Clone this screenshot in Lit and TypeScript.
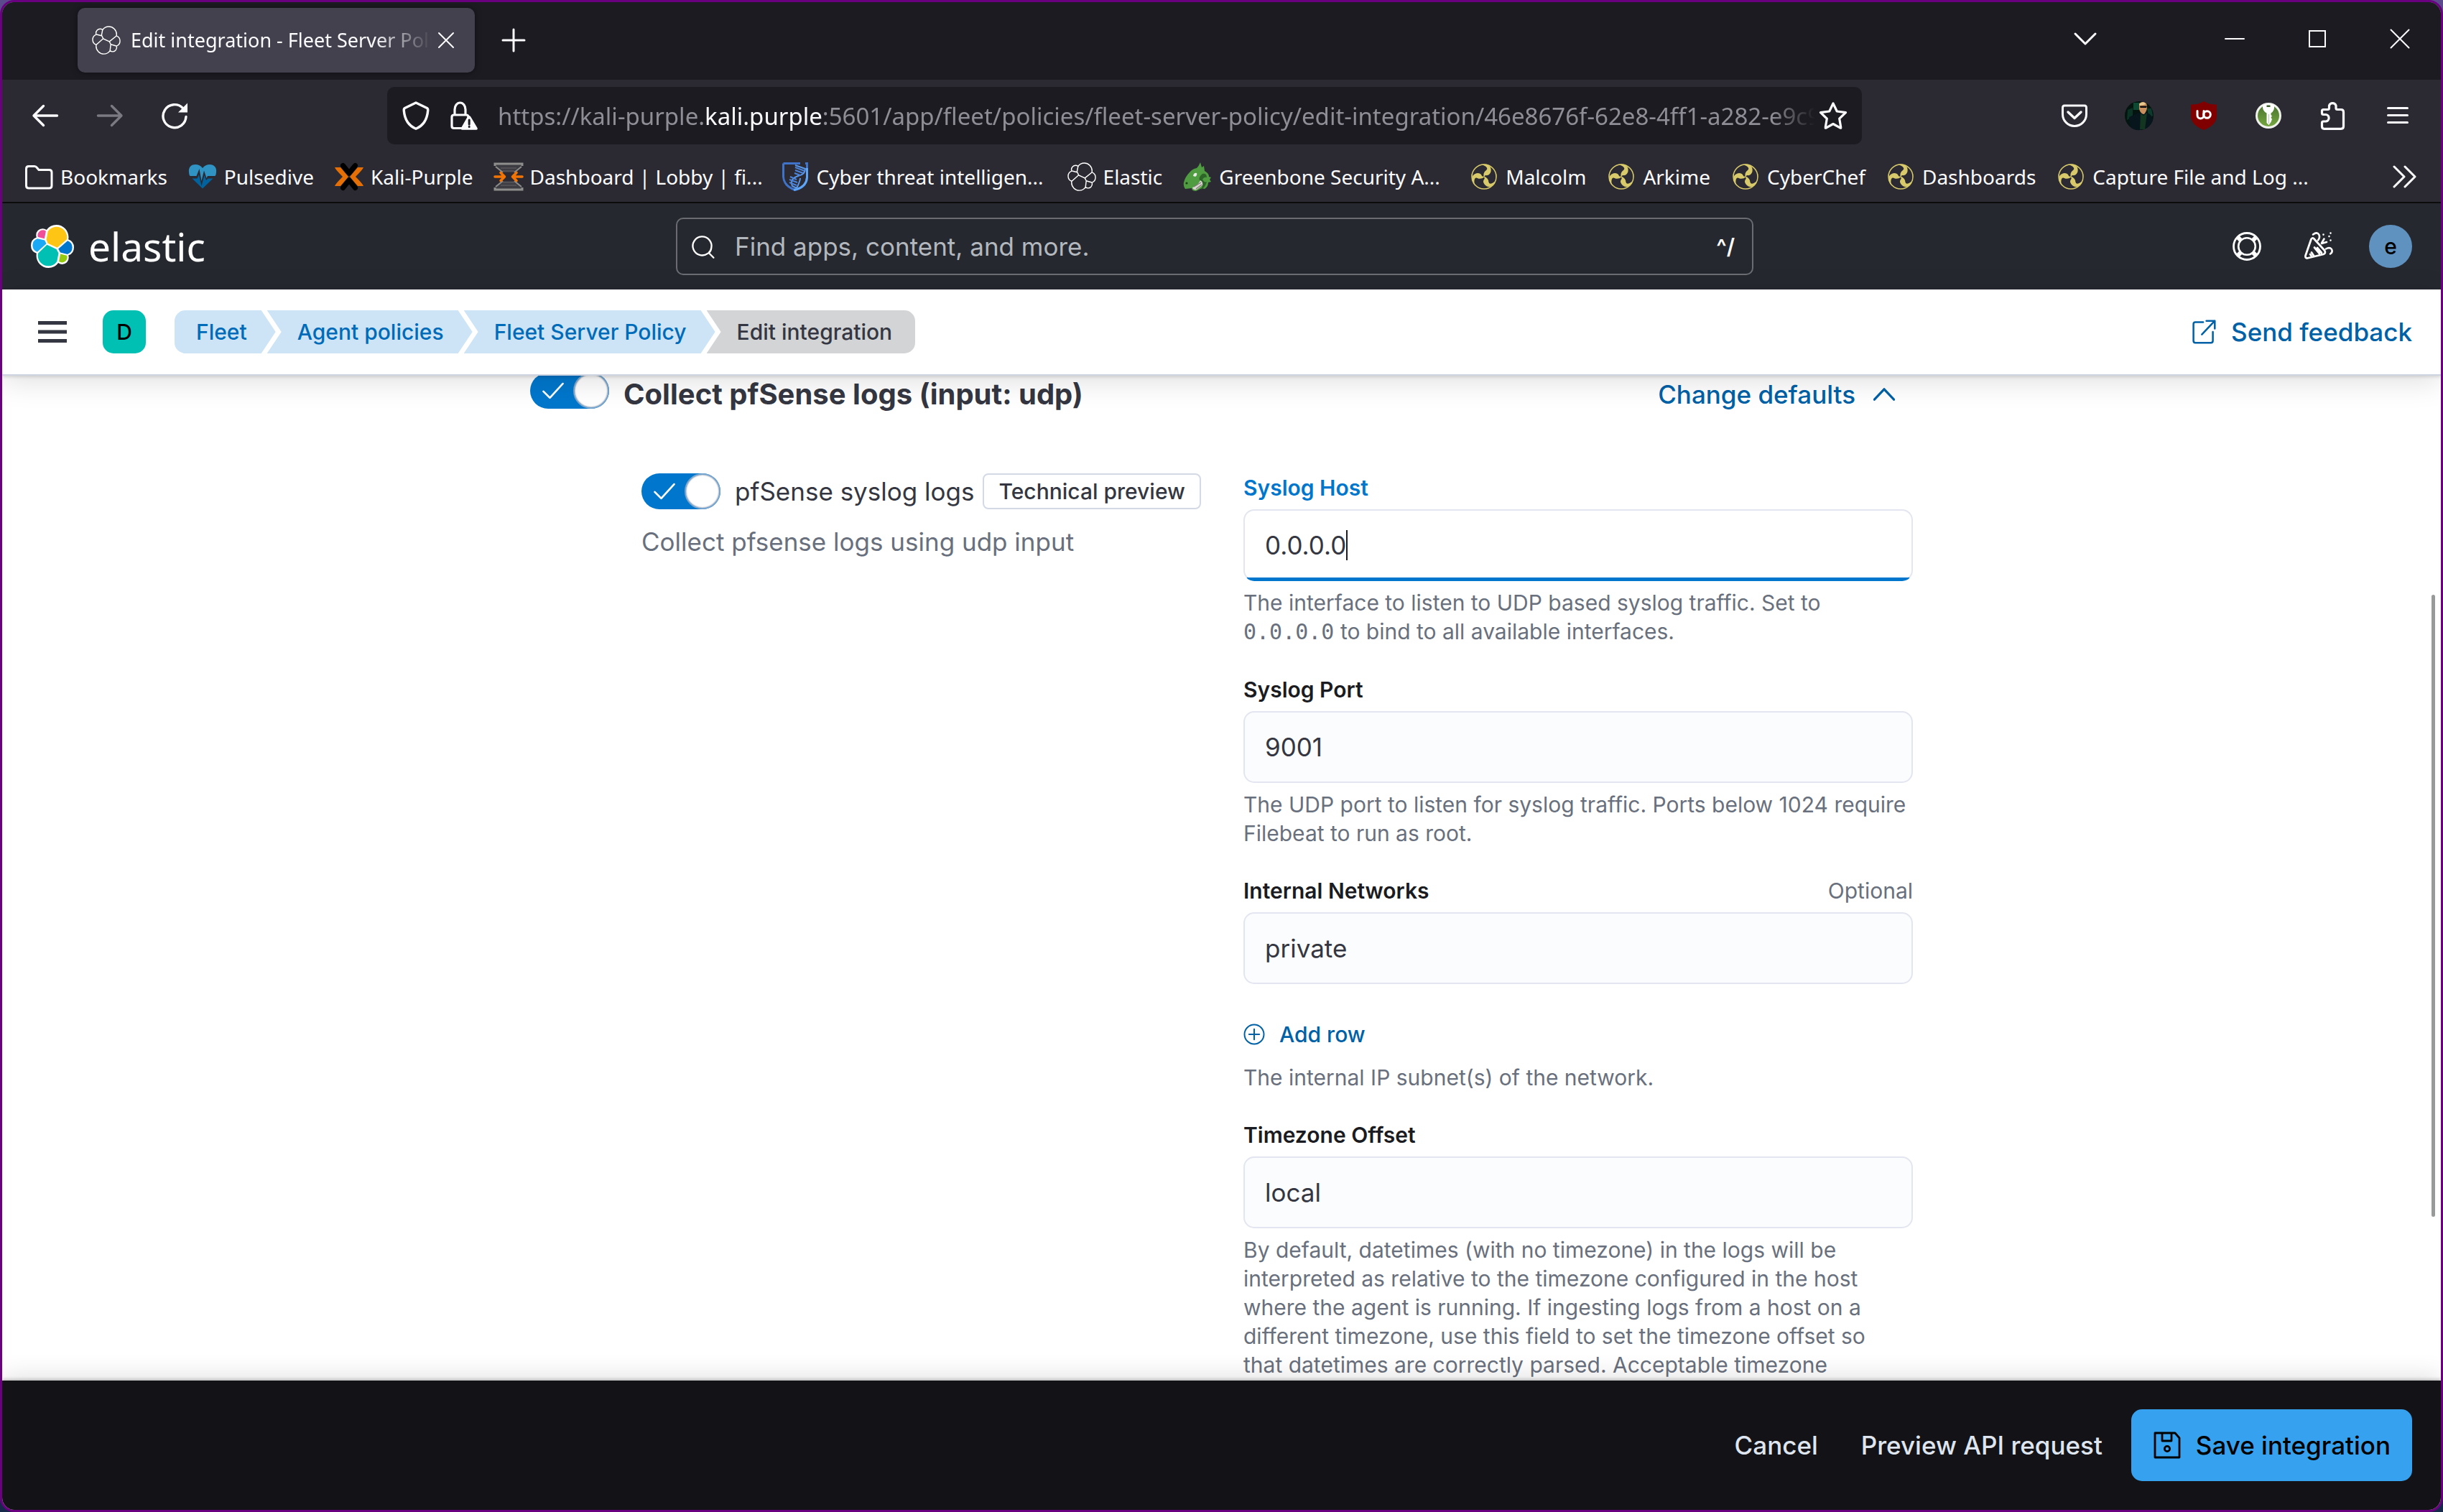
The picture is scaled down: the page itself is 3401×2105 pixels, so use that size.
import { LitElement, html, svg, css, nothing, type TemplateResult } from "lit";
import { customElement, property } from "lit/decorators.js";
import { classMap } from "lit/directives/class-map.js";

/* ---------- Elastic cluster ---------- */

const CLUSTER = {
  outline:
    "M32 16.77a6.334 6.334 0 00-4.172-5.927c.11-.574.165-1.157.165-1.74 0-5.017-4.06-9.1-9.05-9.1a9.02 9.02 0 00-7.317 3.76 4.807 4.807 0 00-2.94-1.01 4.85 4.85 0 00-4.833 4.86 4.9 4.9 0 00.299 1.693A6.372 6.372 0 000 15.273a6.35 6.35 0 004.184 5.949 9.207 9.207 0 00-.162 1.74c0 5.002 4.05 9.07 9.026 9.07a8.99 8.99 0 007.305-3.767 4.8 4.8 0 002.941 1.017 4.85 4.85 0 004.833-4.86 4.9 4.9 0 00-.298-1.693A6.376 6.376 0 0032 16.77z",
  yellow:
    "M12.58 13.787l7.002 3.211 7.066-6.213a7.85 7.85 0 00.152-1.557c0-4.287-3.464-7.763-7.74-7.763-2.56 0-4.942 1.267-6.388 3.39l-1.176 6.119 1.084 2.813z",
  teal:
    "M5.333 21.214a7.976 7.976 0 00-.154 1.576c0 4.3 3.476 7.786 7.765 7.786a7.76 7.76 0 006.41-3.412l1.167-6.1-1.557-2.988-7.03-3.215-6.6 6.353z",
  pink:
    "M5.288 9.067l4.8 1.137L11.138 4.7a3.785 3.785 0 00-2.3-.781 3.816 3.816 0 00-3.808 3.821c0 .456.084.902.257 1.327z",
  sky:
    "M4.872 10.214a5.294 5.294 0 00-3.595 5.004 5.3 5.3 0 003.45 4.95l6.733-6.106-1.236-2.65-5.352-1.198z",
  lime:
    "M20.873 27.164a3.785 3.785 0 002.283.773 3.81 3.81 0 003.8-3.82c0-.457-.084-.9-.256-1.325l-4.794-1.126-1.033 5.498z",
  blue:
    "M21.848 20.563l5.281 1.24a5.32 5.32 0 003.594-5.005 5.296 5.296 0 00-3.437-4.94l-6.907 6.055 1.469 2.65z",
};

/* ---------- icon drawings, on a 40 unit square ---------- */

const line = (d: string, w = 3, color = "currentColor") =>
  svg`<path d=${d} fill="none" stroke=${color} stroke-width=${w} stroke-linecap="round" stroke-linejoin="round"/>`;

const SHAPES: Record<string, TemplateResult<2>> = {
  clusterLine: svg`<g transform="translate(1 1) scale(1.19)" fill="none" stroke="#fff" stroke-width="1.2">
      <path d=${CLUSTER.outline}/>
      <path d="M11.6 3.8l-1.2 6.3 2 4.1 7.2 3.3 8.2-6.6M4.5 9.3l6 1.4M4.3 21.2l8-7.2M19.6 17.5l1.6 3.3-.9 7.4M21.2 20.8l6.4 1.9"/></g>`,
  clusterColor: svg`<g transform="scale(1.25)">
      <path fill="#fff" d=${CLUSTER.outline}/>
      <path fill="#fec514" d=${CLUSTER.yellow}/><path fill="#00bfb3" d=${CLUSTER.teal}/>
      <path fill="#f04e98" d=${CLUSTER.pink}/><path fill="#1ba9f5" d=${CLUSTER.sky}/>
      <path fill="#93c90e" d=${CLUSTER.lime}/><path fill="#07c" d=${CLUSTER.blue}/></g>`,
  close: line("M10 10L30 30M30 10L10 30", 2),
  plus: line("M20 5V35M5 20H35", 3),
  chevronDown: line("M6 13L20 27L34 13", 3),
  minimize: line("M7 20H33", 2),
  maximize: svg`<rect x="9" y="9" width="22" height="22" fill="none" stroke="currentColor" stroke-width="2"/>`,
  windowClose: line("M7.500 7.500L32.500 32.500M32.500 7.500L7.500 32.500", 2),
  back: line("M36.500 20H4M17.500 6.500L4 20L17.500 33.500", 3.4),
  forward: line("M3.500 20H36M22.500 6.500L36 20L22.500 33.500", 3.4),
  reload: svg`${line("M36 21.500A16 16 0 1 1 31.500 9.500", 3.4)}<path d="M38 2.500V15.500H25Z" fill="currentColor"/>`,
  shield: line("M20 2L4.500 9.500Q3 10.500 3.300 13C4.500 27 11 34.500 20 38.200C29 34.500 35.500 27 36.700 13Q37 10.500 35.500 9.500Z", 3.4),
  lock: svg`${line("M17 37.500H6Q3 37.500 3 34.500V22Q3 19 6 19H23Q26 19 26 22V23M7 19V11.500A7.500 9.500 0 0 1 22 11.500V19", 3.2)}
      <path d="M27 20Q28.500 20 29.300 21.500L38.500 37Q39.500 39.500 37 39.800H17.500Q15 39.500 16 37L24.800 21.500Q25.600 20 27 20Z" fill="currentColor"/>
      <path d="M27.200 26V32M27.200 35.300V35.600" stroke="#1c1b22" stroke-width="3" stroke-linecap="round"/>`,
  star: line("M20 3L25.300 14L37.500 15.700L28.700 24.200L30.800 36.500Q31 37.500 30 37.200L20 31.500L10 37.200Q9 37.500 9.200 36.500L11.300 24.200L2.500 15.700L14.700 14Z", 3.2),
  pocket: svg`${line("M6 6H34Q36.500 6 36.500 9V18A16.500 16.500 0 0 1 3.500 18V9Q3.500 6 6 6Z", 3)}${line("M11 15L20 23.500L29 15", 3.4)}`,
  agent: svg`<circle cx="20" cy="20" r="20" fill="#04150f"/>
      <path d="M12 2H20V12H12Z" fill="#0e4a33"/><path d="M4 12L11 9V22L3 26Z" fill="#0a3325"/><path d="M31 10H37L39 20L34 24Z" fill="#0d3b2b"/>
      <path d="M9 37Q5 28 6 22L19 16L31 16Q38 18 39 27Q35 36 27 39Q15 42 9 37Z" fill="#07161c"/>
      <path d="M22 17L26 20L31 16L28 39H21Z" fill="#12361f"/>
      <path d="M20 3Q25-1 30 3Q32 8 30 13Q28 18 26 18Q22 17 20 11Z" fill="#c98f5d"/>
      <path d="M20 4Q25-1 29 3L27 5L21 6Z" fill="#e8c98f"/><path d="M21 6.500H31L30 9H26.500L21.500 9Z" fill="#0c0c0c"/>`,
  ublock: svg`<path d="M20 0Q28 5 38 4.500V20Q38 33 20 40Q2 33 2 20V4.500Q12 5 20 0Z" fill="#800000"/>
      ${line("M11 13.500V19.500A4.500 4.500 0 0 0 20 19.500V13.500", 3, "#fff")}<circle cx="24.500" cy="18.500" r="4.800" fill="none" stroke="#fff" stroke-width="3"/>`,
  keepass: svg`<defs><linearGradient id="kp" x1="0" y1="0" x2="0" y2="1"><stop offset="0" stop-color="#4b7430"/><stop offset="1" stop-color="#75a63f"/></linearGradient></defs>
      <circle cx="20" cy="20" r="18" fill="#f1f1ee"/><circle cx="20" cy="20" r="15" fill="url(#kp)"/>
      <path d="M12 6Q20 1 28 6Q29 13 23.500 16.500L23.500 19L25 20.500L23.500 22.500L25 25L23.500 29L20.500 33L17.500 30V16.500Q11 13 12 6Z" fill="#fff"/>
      <path d="M17.500 5.500H22.500V8H17.500Z" fill="#3d6029"/><path d="M20.500 18V31" stroke="#b9c6ab" stroke-width="1"/>`,
  puzzle: line("M6.500 11.500H12.500Q14.500 11.500 14.500 9.500V6A5 5 0 0 1 24 6V9.500Q24 11.500 26 11.500H31Q34.500 11.500 34.500 15V35Q34.500 38.300 31 38.300H7.500Q4.500 38.300 4.500 35V30Q4.500 28 6.500 28H10A4.800 4.800 0 0 0 10 18.500H6.500Q4.500 18.500 4.500 16.500V13.500Q4.500 11.500 6.500 11.500Z", 3.2),
  menu: line("M6.500 9.500H33.500M6.500 19.500H33.500M6.500 29.500H33.500", 3),
  folder: line("M6 5.500H14Q16 5.500 17.500 7.500L20 10.500H34.500Q38 10.500 38 14V32.500Q38 36 34.500 36H6Q2.500 36 2.500 32.500V9Q2.500 5.500 6 5.500Z", 3),
  pulse: svg`<path d="M1 14C0 6 5 3 10 3Q16 3 20 8Q24 3 30 3C36 3 40 7 39 14Q39 17 37.500 19H27L25.500 22L22 11.500L18.500 26L15.500 9L11.500 19H2.500Q1 17 1 14Z" fill="#2f93c3"/>
      <path d="M5.500 22.500H12.500L15 17L18.500 33L22.500 18L25 25L27.500 22.500H34.500L20 36.500Z" fill="#00639d"/>`,
  kali: svg`${line("M11.500 4.500L20 15L28.500 4.500M11.500 35.500L20 25L28.500 35.500", 7, "#000")}
      <path d="M0 7H8L19 20L8 33H0Q1 30 11 20Q1 10 0 7ZM40 7H32L21 20L32 33H40Q39 30 29 20Q39 10 40 7Z" fill="#e66f05"/>`,
  lobby: svg`<path d="M2 2H38V5L28 14H12L2 5ZM2 38H38V35L28 26H12L2 35Z" fill="#3c3c42"/>
      <path d="M1 5V2H39V5M1 35V38H39V35" fill="none" stroke="#8e8e8c" stroke-width="3"/>
      <path d="M2 6L12 14M38 6L28 14M2 34L12 26M38 34L28 26" stroke="#8c8c8a" stroke-width="2"/>
      <path d="M9 8H31M9 32H31M12 12H28M12 28H28" stroke="#55565b" stroke-width="1.500"/>
      ${line("M1 20H13M9 14.500L14.500 20L9 25.500M39 20H27M31 14.500L25.500 20L31 25.500", 3.6, "#f27405")}`,
  threat: svg`<path d="M3.500 1.500H27M34 1.500H36.500V21C36 30 30 36 20 38.500C10 35 4 29 3.500 20V1.500" fill="none" stroke="#3f73c9" stroke-width="3"/>
      <path d="M36.500 8V21C36 30 30 36 18 38.500" fill="none" stroke="#5ea5f5" stroke-width="3"/>
      <path d="M20 4L34 9Q34 17 24 19Q12 23 16 33L22 36Q27 26 27 22" fill="none" stroke="#5a97e8" stroke-width="2"/>
      <path d="M20 7L33 12M20 11L31 15M19 15L27 18M13 20L22 24M12 24L23 28M12 28L22 32" stroke="#4b83d8" stroke-width="2"/>`,
  dragon: svg`<path d="M24 0L26 7L29 5L30 12Q36 15 36 20L39 21L37 24L39 27L35 28Q35 34 30 37L26 36L18 40Q12 40 12 36L3 37Q0 33 1 28Q3 20 9 14Q13 9 19 8Q22 5 24 0Z" fill="#509c41"/>
      <path d="M27 16Q33 15 33 21Q29 20 27 24Q30 29 33 27Q31 35 25 38Q29 31 24 26Q20 22 27 16Z" fill="#2d6427"/>
      <path d="M13 35Q20 33 24 25Q28 27 27 32L19 38Q14 39 13 35Z" fill="#d9d6cf"/><path d="M15 34L25 28M18 37L26 31" stroke="#7d7b74" stroke-width="1.200"/>
      <path d="M14 19Q15 14 19 15Q20 18 17 20Z" fill="#e9ebe6"/><circle cx="5" cy="29" r="1.600" fill="#1d3d19"/>`,
  trefoil: svg`<circle cx="20" cy="20" r="17" fill="none" stroke="#d8ca6a" stroke-width="1.600"/>
      <g fill="#d8ca6a">${[0, 120, 240].map(
        (turn) => svg`<path transform=${`rotate(${turn} 20 20)`} d="M19.500 20.500Q18.500 14 23 11Q26 8.500 22 5.500Q19 3.500 16 3Q25 1 29 7Q31 13 27 17Q25.500 18.500 22 18Z"/>`,
      )}</g>`,
  more: line("M6 6L20 20L6 34M21 6L35 20L21 34", 3),
  search: line("M27 31A14.500 14.500 0 1 1 32.500 22.500Q32 27 28.500 30L36 37.500", 2.6),
  lifebuoy: svg`<circle cx="20" cy="20" r="18.500" fill="none" stroke="currentColor" stroke-width="2.800"/>
      <circle cx="20" cy="20" r="11.800" fill="none" stroke="currentColor" stroke-width="2.600"/>
      <path d="M7.500 7.500L12 12M32.500 7.500L28 12M7.500 32.500L12 28M32.500 32.500L28 28" stroke="currentColor" stroke-width="6"/>`,
  party: svg`${line("M13 9L28 25.500Q30.500 29.500 26.500 31L4 36.500Q1 36.500 1.500 33L9.500 10Q11 7.500 13 9ZM10 28.500L13 33M9.500 33L8 31M14 21.500L21 30M18 22L24 29", 2.8)}
      ${line("M12 3.500Q18-1 20.500 4Q22 8 19 11.500M24 15.500L27.500 9.500M24 16L31 14M30 23.500Q35 20.500 38 24Q40 28 36 30.500", 2.6)}
      ${line("M26.500 3.500V3.600M34.500 6V6.100M36.500 1.500V1.600M36.500 11.500V11.600", 2.6)}`,
  external: line("M19 5H7Q4 5 4 8V34Q4 37 7 37H31Q34 37 34 34V20M24 3H37V15M37 3L17 24", 2.8),
  chevronUp: line("M5 28L20 12L35 28", 3.600),
  addCircle: svg`<circle cx="20" cy="20" r="18" fill="none" stroke="currentColor" stroke-width="2.600"/>${line("M20 10.500V29.500M10.500 20H29.500", 2.8)}`,
  save: svg`<path d="M3 3H31L37 10V37H3ZM13 4V14H26V4" fill="none" stroke="currentColor" stroke-width="2.800" stroke-linejoin="round"/><circle cx="20" cy="25" r="3.600" fill="none" stroke="currentColor" stroke-width="2.800"/>`,
  check: line("M5 21L15 31L35 9", 3),
  bars: svg`<path d="M0 5H40V10H0ZM0 17.500H40V22.500H0ZM0 30H40V35H0Z" fill="currentColor"/>`,
};

const icon = (name: string, cls = "i40") =>
  html`<svg class="icon ${cls}" viewBox="0 0 40 40" aria-hidden="true">${SHAPES[name]}</svg>`;

const iconStyles = css`
  *, *::before, *::after { box-sizing: border-box; }
  .icon { display: block; flex: none; overflow: visible; }
  .i30 { width: 30px; height: 30px; }
  .i36 { width: 36px; height: 36px; }
  .i40 { width: 40px; height: 40px; }
  .i60 { width: 60px; height: 60px; }
  button { border: 0; margin: 0; padding: 0; background: none; color: inherit; font: inherit; }
  a { color: inherit; text-decoration: none; }
`;

/* ---------- browser chrome ---------- */

const BOOKMARKS: [string, string][] = [
  ["folder", "Bookmarks"],
  ["pulse", "Pulsedive"],
  ["kali", "Kali-Purple"],
  ["lobby", "Dashboard | Lobby | fi..."],
  ["threat", "Cyber threat intelligen..."],
  ["clusterLine", "Elastic"],
  ["dragon", "Greenbone Security A..."],
  ["trefoil", "Malcolm"],
  ["trefoil", "Arkime"],
  ["trefoil", "CyberChef"],
  ["trefoil", "Dashboards"],
  ["trefoil", "Capture File and Log ..."],
];

@customElement("browser-chrome")
export class BrowserChrome extends LitElement {
  static styles = [
    iconStyles,
    css`
      :host {
        display: block;
        color: #fbfbfe;
        background: #2b2a33;
        border-bottom: 2px solid #0c0c0d;
        font-family: "Noto Sans", "Open Sans", sans-serif;
        font-size: 28px;
      }
      .tabbar { display: flex; height: 108px; padding: 8px 0 0 105px; background: #1c1b22; }
      .tab {
        display: flex; align-items: center; gap: 14px;
        width: 553px; height: 90px; padding: 0 20px;
        border-radius: 10px; background: #42414d;
        box-shadow: 0 0 8px rgba(0, 0, 0, 0.5);
      }
      .tab-title {
        flex: 1; overflow: hidden; white-space: nowrap; font-size: 27px; line-height: 60px;
        mask-image: linear-gradient(to left, transparent, #000 80px);
      }
      .tab-close { margin-left: -14px; }
      .new-tab { display: grid; place-items: center; width: 78px; height: 90px; margin-left: 15px; }
      .grow { flex: 1; }
      .list-tabs { display: grid; place-items: center; width: 80px; height: 86px; margin-right: 110px; }
      .win { display: grid; place-items: center; width: 115px; height: 86px; }
      .toolbar { display: flex; align-items: center; height: 100px; padding: 0 15px; }
      .tool { display: grid; place-items: center; width: 90px; height: 80px; }
      .dim { color: #7b7a82; }
      .side { flex: 251; }
      .urlbar {
        flex: 2013; min-width: 0; height: 80px; padding: 0 20px;
        display: flex; align-items: center; gap: 27px;
        border-radius: 10px; background: #1c1b22;
      }
      .url {
        flex: 1; overflow: hidden; white-space: nowrap; padding-top: 2px; font-size: 33px; line-height: 60px;
        color: #8f8e96; mask-image: linear-gradient(to left, transparent, #000 60px);
      }
      .url b { font-weight: 400; color: #fbfbfe; }
      .star { margin-left: -22px; }
      .bookmarks { display: flex; align-items: center; height: 70px; padding: 0 31px; gap: 29px; }
      .bookmark { display: flex; align-items: center; gap: 10px; white-space: nowrap; }
      .long { width: 320px; }
    `,
  ];

  render() {
    return html`
      <div class="tabbar">
        <div class="tab">
          ${icon("clusterLine")}
          <span class="tab-title">Edit integration - Fleet Server Policy</span>
          <button class="tab-close" aria-label="Close tab">${icon("close")}</button>
        </div>
        <button class="new-tab" aria-label="New tab">${icon("plus")}</button>
        <div class="grow"></div>
        <button class="list-tabs" aria-label="List all tabs">${icon("chevronDown")}</button>
        <button class="win" aria-label="Minimize">${icon("minimize")}</button>
        <button class="win" aria-label="Maximize">${icon("maximize")}</button>
        <button class="win" aria-label="Close">${icon("windowClose")}</button>
      </div>
      <div class="toolbar">
        <button class="tool" aria-label="Back">${icon("back")}</button>
        <button class="tool dim" aria-label="Forward">${icon("forward")}</button>
        <button class="tool" aria-label="Reload">${icon("reload")}</button>
        <div class="side"></div>
        <div class="urlbar">
          ${icon("shield")} ${icon("lock")}
          <div class="url" role="textbox" tabindex="0" aria-label="Address">https://kali-purple.<b>kali.purple</b>:5601/app/fleet/policies/fleet-server-policy/edit-integration/46e8676f-62e8-4ff1-a282-e9c9</div>
          <button class="star" aria-label="Bookmark this page">${icon("star")}</button>
        </div>
        <div class="side"></div>
        <button class="tool" aria-label="Save to Pocket">${icon("pocket")}</button>
        <button class="tool" aria-label="Agent switcher">${icon("agent")}</button>
        <button class="tool" aria-label="uBlock Origin">${icon("ublock")}</button>
        <button class="tool" aria-label="KeePass">${icon("keepass")}</button>
        <button class="tool" aria-label="Extensions">${icon("puzzle")}</button>
        <button class="tool" aria-label="Menu">${icon("menu")}</button>
      </div>
      <nav class="bookmarks">
        ${BOOKMARKS.map(
          ([name, label]) => html`<a class="bookmark" href="#">${icon(name)}<span class=${classMap({ long: label.endsWith("...") })}>${label}</span></a>`,
        )}
        <div class="grow"></div>
        <button aria-label="More bookmarks">${icon("more")}</button>
      </nav>
    `;
  }
}

/* ---------- Kibana header ---------- */

@customElement("kibana-header")
export class KibanaHeader extends LitElement {
  static styles = [
    iconStyles,
    css`
      :host { display: block; position: relative; z-index: 1; font-family: Inter, sans-serif; }
      .top {
        display: grid; grid-template-columns: 898fr 1500fr 917fr; align-items: center;
        height: 120px; padding: 0 40px; background: #25282f; color: #fff;
      }
      .brand { display: flex; align-items: center; gap: 20px; }
      .wordmark { font: 400 55px/60px "Noto Sans", sans-serif; }
      .search {
        display: flex; align-items: center; gap: 26px;
        height: 80px; padding: 0 24px 0 18px; border: 2px solid #6a6c71; border-radius: 10px;
      }
      .search input {
        flex: 1; min-width: 0; padding: 0; border: 0; outline: 0; background: none;
        color: #fff; font: 400 35px/50px Inter, sans-serif;
      }
      .search input::placeholder { color: #b3b7be; opacity: 1; }
      .key { font-size: 30px; font-weight: 600; }
      .actions { display: flex; justify-content: flex-end; align-items: center; gap: 60px; }
      .avatar {
        display: grid; place-items: center; width: 60px; height: 60px; margin-left: -10px;
        border-radius: 50%; background: #6092c0; color: #000; font-size: 30px; font-weight: 500;
      }
      .sub {
        display: flex; align-items: center; height: 120px; padding: 0 40px 0 50px;
        background: #fff; color: #343741; border-bottom: 2px solid #cfd4e2;
        box-shadow: 0 2px 4px rgba(0, 0, 0, 0.12), 0 8px 40px rgba(0, 0, 0, 0.13);
      }
      .space {
        display: grid; place-items: center; width: 60px; height: 60px; margin: 0 40px 0 50px;
        border-radius: 15px; background: #00bfb3; color: #000; font-size: 30px; font-weight: 500;
      }
      .crumbs { display: flex; margin: 0; padding: 0; list-style: none; font-size: 30px; font-weight: 500; line-height: 60px; }
      .crumb {
        margin-right: -12px; padding: 0 40px 0 42px; background: #cce4f5; color: #006bb8; white-space: nowrap;
        clip-path: polygon(0 0, calc(100% - 20px) 0, 100% 50%, calc(100% - 20px) 100%, 0 100%, 20px 50%);
      }
      .crumb:first-child {
        padding-left: 30px; border-radius: 15px 0 0 15px;
        clip-path: polygon(0 0, calc(100% - 20px) 0, 100% 50%, calc(100% - 20px) 100%, 0 100%);
      }
      .crumb:last-child {
        margin-right: 0; padding-right: 32px; border-radius: 0 15px 15px 0; background: #d3d4d6; color: #343741;
        clip-path: polygon(0 0, 100% 0, 100% 100%, 0 100%, 20px 50%);
      }
      .feedback {
        display: flex; align-items: center; gap: 20px; margin-left: auto;
        color: #0061a6; font-size: 35px; font-weight: 500;
      }
    `,
  ];

  render() {
    return html`
      <header class="top">
        <a class="brand" href="#" aria-label="Elastic home">${icon("clusterColor", "i60")}<span class="wordmark">elastic</span></a>
        <label class="search">
          ${icon("search", "i36")}
          <input type="search" placeholder="Find apps, content, and more." aria-label="Find apps, content, and more" />
          <span class="key">^/</span>
        </label>
        <div class="actions">
          <button aria-label="Help">${icon("lifebuoy")}</button>
          <button aria-label="News">${icon("party")}</button>
          <button class="avatar" aria-label="Account">e</button>
        </div>
      </header>
      <div class="sub">
        <button aria-label="Toggle navigation">${icon("bars")}</button>
        <button class="space" aria-label="Default space">D</button>
        <ol class="crumbs">
          <li class="crumb"><a href="#">Fleet</a></li>
          <li class="crumb"><a href="#">Agent policies</a></li>
          <li class="crumb"><a href="#">Fleet Server Policy</a></li>
          <li class="crumb" aria-current="page">Edit integration</li>
        </ol>
        <a class="feedback" href="#">${icon("external", "i36")}Send feedback</a>
      </div>
    `;
  }
}

/* ---------- form pieces ---------- */

@customElement("toggle-switch")
export class ToggleSwitch extends LitElement {
  @property() label = "";

  static styles = [
    iconStyles,
    css`
      :host { display: block; flex: none; }
      .switch { display: grid; align-items: center; width: 110px; height: 50px; }
      .switch > * { grid-area: 1 / 1; }
      .track {
        appearance: none; display: flex; justify-content: flex-end; width: 110px; height: 50px; margin: 0;
        border-radius: 25px; background: #0077cc;
      }
      .track::after {
        content: ""; width: 50px; height: 50px; border-radius: 50%;
        border: 2px solid #7ba6cf; background: #fff; box-shadow: inset 0 0 2px #69707d;
      }
      .icon { margin-left: 14px; color: #fff; pointer-events: none; }
    `,
  ];

  render() {
    return html`<label class="switch">
      <input class="track" type="checkbox" role="switch" checked aria-label=${this.label} />
      ${icon("check", "i36")}
    </label>`;
  }
}

@customElement("form-row")
export class FormRow extends LitElement {
  @property() label = "";
  @property() value = "";
  @property({ type: Boolean }) optional = false;
  @property({ type: Boolean }) focused = false;
  @property({ type: Boolean }) rows = false;

  static styles = [
    iconStyles,
    css`
      :host { display: block; font: 400 30px/40px Inter, sans-serif; color: #69707d; }
      .head { display: flex; justify-content: space-between; margin-bottom: 10px; }
      label { font-weight: 600; color: #1a1c21; }
      .focused label { color: #0077cc; }
      .field {
        display: flex; align-items: center; height: 100px; padding: 0 28px;
        border: 2px solid #e3e5f0; border-radius: 15px; background: #fbfcfd;
      }
      .focused .field {
        border-bottom-color: #0077cc;
        background: linear-gradient(#0077cc, #0077cc) bottom / 100% 5px no-repeat border-box, #fff;
      }
      .text {
        flex: 1; min-width: 0; padding: 0; border: 0; outline: 0; background: none;
        color: #343741; font: 400 35px/50px Inter, sans-serif;
      }
      .focused .text { flex: none; field-sizing: content; }
      .caret { width: 2px; height: 42px; background: #1a1c21; }
      .add {
        display: flex; align-items: center; gap: 20px; height: 60px; margin-top: 40px;
        color: #0061a6; font-weight: 500;
      }
      .help { margin-top: 10px; padding-right: 8px; }
    `,
  ];

  render() {
    return html`<div class=${classMap({ row: true, focused: this.focused })}>
      <div class="head">
        <label for="field">${this.label}</label>
        ${this.optional ? html`<span>Optional</span>` : nothing}
      </div>
      <div class="field">
        <input class="text" id="field" type="text" .value=${this.value} />
        ${this.focused ? html`<span class="caret"></span>` : nothing}
      </div>
      ${this.rows ? html`<button class="add">${icon("addCircle", "i30")}Add row</button>` : nothing}
      <div class="help"><slot></slot></div>
    </div>`;
  }
}

/* ---------- page ---------- */

@customElement("app-root")
export class AppRoot extends LitElement {
  static styles = [
    iconStyles,
    css`
      :host {
        display: block; height: 100vh; overflow: hidden;
        background: linear-gradient(#5b4a8c 50%, #16294a 50%);
        font-family: Inter, sans-serif; color: #343741;
      }
      .window {
        display: flex; flex-direction: column; height: 100%; overflow: hidden;
        border: 3px solid #6a0080; border-radius: 20px; background: #fff;
      }
      .body { position: relative; flex: 1; min-height: 0; margin-top: -4px; overflow: hidden; }
      .thumb {
        position: absolute; right: 8px; top: 309px; width: 5px; height: 866px;
        border-radius: 3px; background: #98999b;
      }
      .panel { max-width: 1925px; margin: 0 auto; }
      .group { display: flex; align-items: flex-start; gap: 20px; height: 60px; margin-bottom: 80px; }
      h3 { margin: 0; font-size: 40px; font-weight: 700; line-height: 60px; }
      .defaults {
        display: flex; align-items: center; gap: 22px; margin-left: auto; padding-right: 22px;
        color: #0061a6; font-size: 35px; font-weight: 500; line-height: 60px;
      }
      .stream { display: grid; grid-template-columns: 838fr 932fr; padding-left: 155px; }
      .name { display: flex; align-items: center; font-size: 35px; line-height: 50px; }
      .name-text { margin: 0 12px 0 20px; }
      .badge {
        padding: 0 20px; border: 2px solid #d3dae6; border-radius: 8px;
        font-size: 30px; font-weight: 500; line-height: 46px;
      }
      .about { margin: 20px 0 0; color: #69707d; font-size: 35px; line-height: 50px; }
      .fields { display: grid; gap: 40px; align-content: start; }
      code { font: 400 30px/41px "DejaVu Sans Mono", "Liberation Mono", monospace; }
      .footer {
        position: relative; display: flex; justify-content: flex-end; align-items: center; gap: 60px;
        height: 180px; padding-right: 40px; background: #131317; color: #dfe5ef;
        font-size: 35px; font-weight: 500;
        box-shadow: 0 -2px 4px rgba(0, 0, 0, 0.2), 0 -6px 32px rgba(0, 0, 0, 0.12);
      }
      .save {
        display: flex; align-items: center; gap: 20px; height: 100px; margin-left: -20px; padding: 0 30px;
        border-radius: 15px; background: #36a2ef; color: #000;
      }
    `,
  ];

  render() {
    return html`<div class="window">
      <browser-chrome></browser-chrome>
      <kibana-header></kibana-header>
      <main class="body">
        <div class="panel">
          <div class="group">
            <toggle-switch label="Collect pfSense logs (input: udp)"></toggle-switch>
            <h3>Collect pfSense logs (input: udp)</h3>
            <button class="defaults">Change defaults${icon("chevronUp", "i36")}</button>
          </div>
          <div class="stream">
            <section>
              <div class="name">
                <toggle-switch label="pfSense syslog logs"></toggle-switch>
                <span class="name-text">pfSense syslog logs</span>
                <span class="badge">Technical preview</span>
              </div>
              <p class="about">Collect pfsense logs using udp input</p>
            </section>
            <section class="fields">
              <form-row label="Syslog Host" value="0.0.0.0" focused>The interface to listen to UDP based syslog traffic. Set to <code>0.0.0.0</code> to bind to all available interfaces.</form-row>
              <form-row label="Syslog Port" value="9001">The UDP port to listen for syslog traffic. Ports below 1024 require Filebeat to run as root.</form-row>
              <form-row label="Internal Networks" value="private" optional rows>The internal IP subnet(s) of the network.</form-row>
              <form-row label="Timezone Offset" value="local">By default, datetimes (with no timezone) in the logs will be interpreted as relative to the timezone configured in the host where the agent is running. If ingesting logs from a host on a different timezone, use this field to set the timezone offset so that datetimes are correctly parsed. Acceptable timezone</form-row>
            </section>
          </div>
        </div>
        <div class="thumb"></div>
      </main>
      <footer class="footer">
        <button>Cancel</button>
        <button>Preview API request</button>
        <button class="save">${icon("save")}Save integration</button>
      </footer>
    </div>`;
  }
}
